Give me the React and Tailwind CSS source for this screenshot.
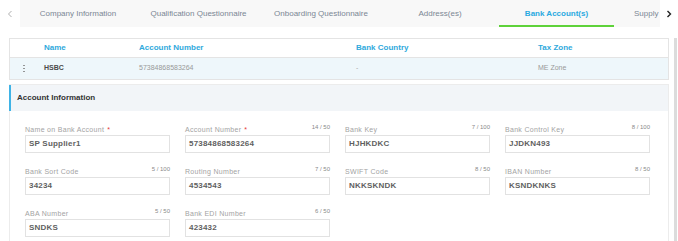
import { useState } from "react";

const tabs = [
  { label: "Company Information", w: "w-[116px]" },
  { label: "Qualification Questionnaire", w: "w-[125px]" },
  { label: "Onboarding Questionnaire", w: "w-[120px]" },
  { label: "Address(es)", w: "w-[118px]" },
  { label: "Bank Account(s)", w: "w-[115px]", active: true },
];

const fields = [
  { label: "Name on Bank Account", value: "SP Supplier1", required: true },
  { label: "Account Number", value: "57384868583264", required: true, count: "14 / 50" },
  { label: "Bank Key", value: "HJHKDKC", count: "7 / 100" },
  { label: "Bank Control Key", value: "JJDKN493", count: "8 / 100" },
  { label: "Bank Sort Code", value: "34234", count: "5 / 100" },
  { label: "Routing Number", value: "4534543", count: "7 / 50" },
  { label: "SWIFT Code", value: "NKKSKNDK", count: "8 / 50" },
  { label: "IBAN Number", value: "KSNDKNKS", count: "8 / 50" },
  { label: "ABA Number", value: "SNDKS", count: "5 / 50" },
  { label: "Bank EDI Number", value: "423432", count: "6 / 50" },
];

function Field({ label, value, required, count }) {
  return (
    <div className="flex flex-col">
      <div className="flex items-start justify-between h-[11px]">
        <span className="mt-[2px] text-[7px] leading-[7px] tracking-[0.3px] text-[#a3a3a3]">
          {label}
          {required && <span className="text-[#e53935] ml-[3px]">*</span>}
        </span>
        {count && (
          <span className="text-[6px] leading-[6px] text-[#8a8a8a]">{count}</span>
        )}
      </div>
      <div className="h-[18px] border border-[#e2e2e2] bg-white flex items-center pl-[3px] text-[8px] font-bold text-[#5f5f5f] tracking-[0.2px]">
        {value}
      </div>
    </div>
  );
}

export default function App() {
  const [active] = useState(4);

  return (
    <div className="w-[678px] h-[241px] overflow-hidden bg-white" style={{ fontFamily: '"Liberation Sans", Arial, sans-serif' }}>
      {/* Tabs */}
      <div className="flex h-[27px]">
        <div className="w-[20px] flex items-center justify-center">
          <svg width="6" height="8" viewBox="0 0 6 8"><path d="M4.5 1 L1.5 4 L4.5 7" stroke="#b0b0b0" strokeWidth="1" fill="none" /></svg>
        </div>
        <div className="flex-1 bg-[#f8f8f8] flex overflow-hidden">
          {tabs.map((t, i) => (
            <div
              key={t.label}
              className={`${t.w} shrink-0 flex items-center justify-center text-[8px] whitespace-nowrap ${
                i === active
                  ? "text-[#29a9e0] font-bold border-b-2 border-[#5ed23a] pt-[2px]"
                  : "text-[#7b8794]"
              }`}
            >
              {t.label}
            </div>
          ))}
          <div className="shrink-0 pl-[20px] flex items-center text-[8px] text-[#7b8794] whitespace-nowrap">
            Supply
          </div>
        </div>
        <div className="w-[18px] flex items-center justify-center">
          <svg width="6" height="8" viewBox="0 0 6 8"><path d="M1.5 1 L4.5 4 L1.5 7" stroke="#222" strokeWidth="1.4" fill="none" /></svg>
        </div>
      </div>

      <div className="flex mt-[11px]">
        <div className="flex-1 pl-[9px] pr-[5px]">
          {/* Table */}
          <div className="border border-[#e4e4e4]">
            <div className="grid grid-cols-[34px_95px_217px_182px_1fr] h-[19px] items-center text-[8px] font-bold text-[#2fa9dc] border-b border-[#e4e4e4]">
              <div />
              <div>Name</div>
              <div>Account Number</div>
              <div>Bank Country</div>
              <div>Tax Zone</div>
            </div>
            <div className="grid grid-cols-[34px_95px_217px_182px_1fr] h-[21px] items-center bg-[#eef7fb] text-[7px]">
              <div className="flex flex-col items-center gap-[1.5px] w-[28px]">
                <span className="w-[1.5px] h-[1.5px] bg-[#888] rounded-full" />
                <span className="w-[1.5px] h-[1.5px] bg-[#888] rounded-full" />
                <span className="w-[1.5px] h-[1.5px] bg-[#888] rounded-full" />
              </div>
              <div className="font-bold text-[#4a4a4a]">HSBC</div>
              <div className="text-[#999]">57384868583264</div>
              <div className="text-[#aaa]">-</div>
              <div className="text-[#999]">ME Zone</div>
            </div>
          </div>

          {/* Account Information card */}
          <div className="mt-[4px] border border-[#ececec]">
            <div className="h-[26px] bg-[#f2f5f8] border-l-2 border-[#3fb3e6] flex items-center pl-[6px] text-[8px] font-bold text-[#333] -ml-px">
              Account Information
            </div>
            <div className="grid grid-cols-[repeat(4,145px)] gap-x-[15px] gap-y-[13px] pl-[15px] pt-[13px] pb-[14px]">
              {fields.map((f) => (
                <Field key={f.label} {...f} />
              ))}
            </div>
          </div>
        </div>
        <div className="w-[3px] mr-[1px] bg-[#dcdcdc] h-[210px]" />
      </div>
    </div>
  );
}
